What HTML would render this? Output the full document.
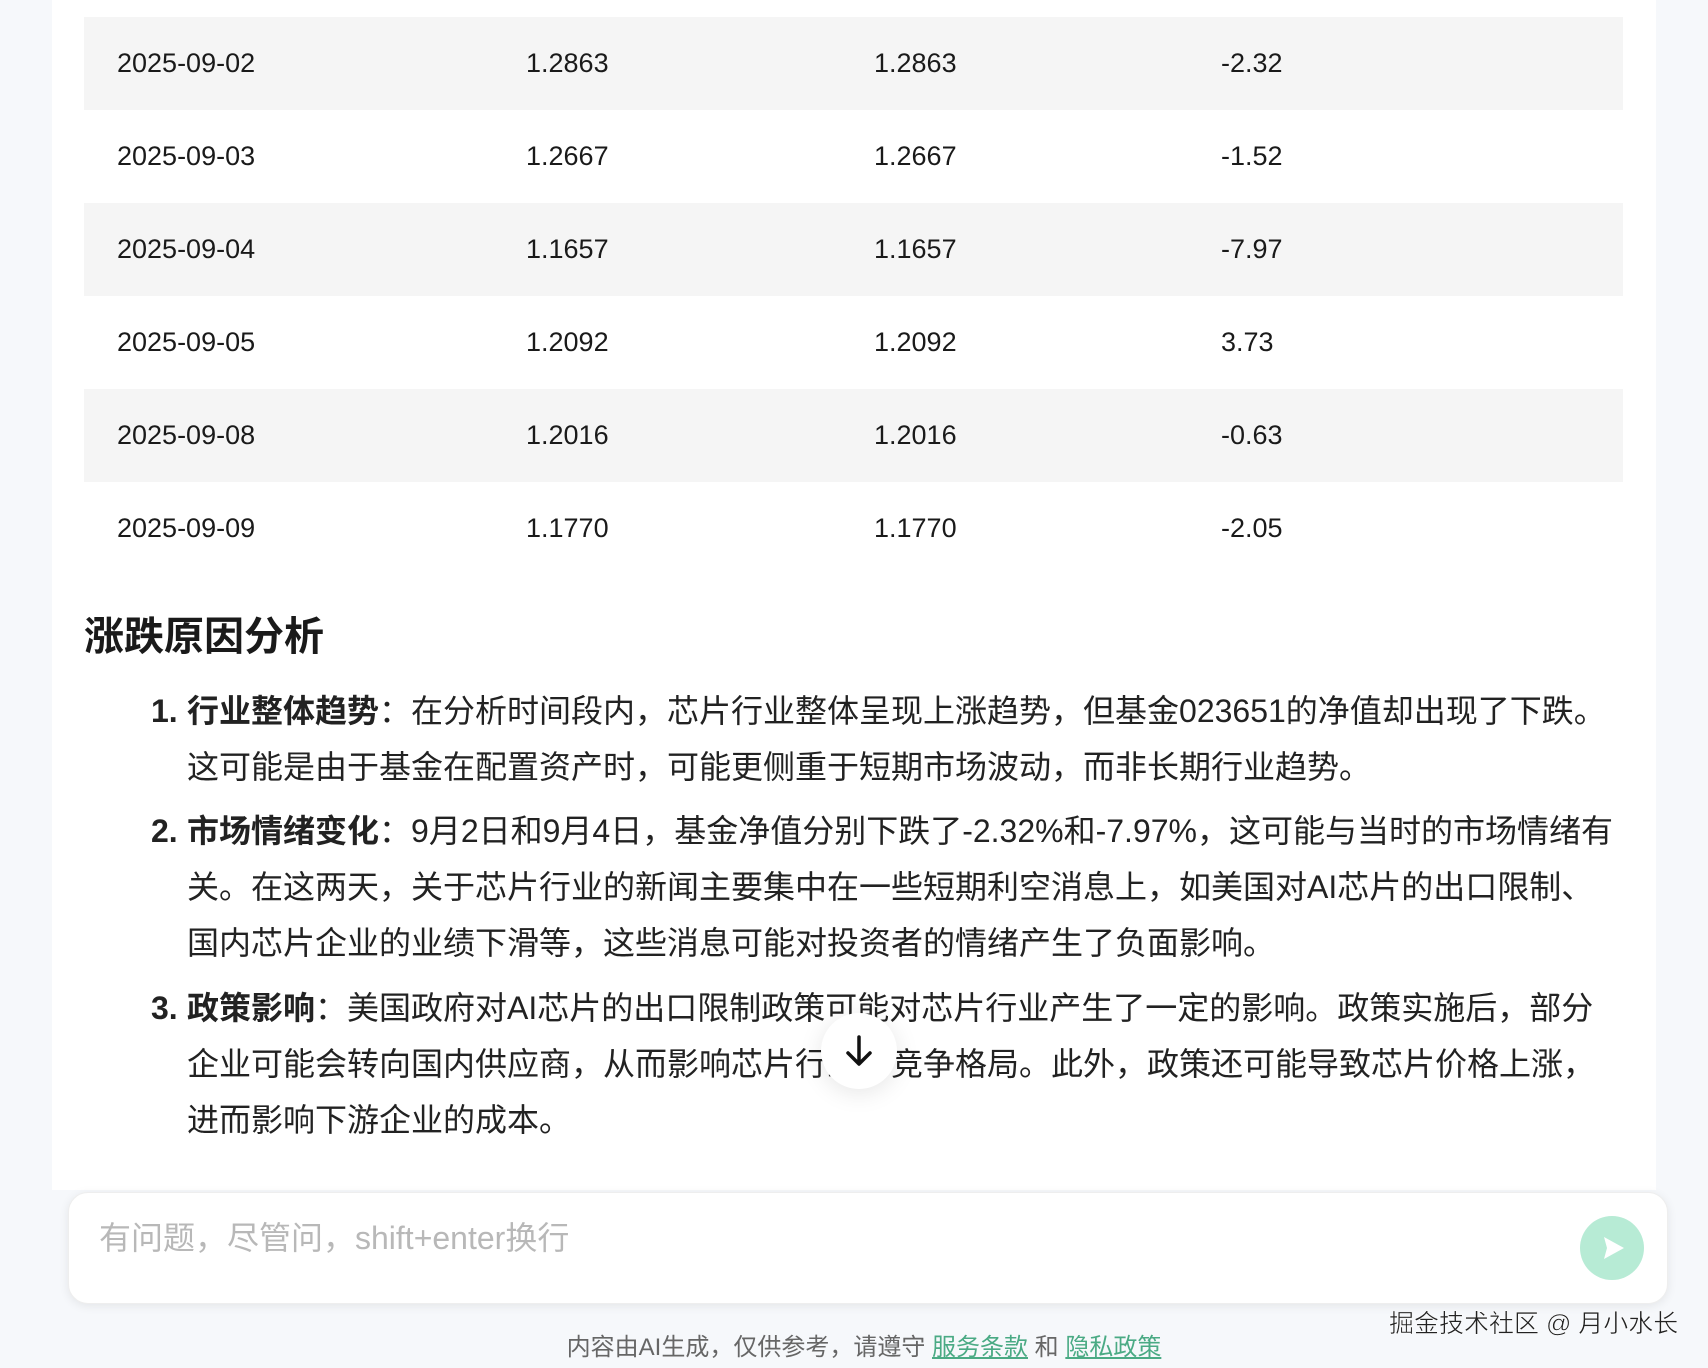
<!DOCTYPE html>
<html><head><meta charset="utf-8"><style>
body{margin:0;width:1708px;height:1368px;background:#f6f8fb;font-family:"Liberation Sans","Noto Sans CJK SC",sans-serif;position:relative;overflow:hidden;color:#1a1a1a}
.panel{position:absolute;left:52px;top:0;width:1604px;height:1190px;background:#fff}
.row{position:absolute;left:84px;width:1539px;height:93px;font-size:27px;line-height:93px}
.row.g{background:#f5f5f5}
.row span{position:absolute;top:0}
h2{position:absolute;left:84px;top:610px;margin:0;font-size:40px;line-height:54px;font-weight:bold}
.li{position:absolute;left:187px;width:1500px;font-size:32px;line-height:56px;color:#222;white-space:nowrap}
.li b{position:absolute;left:-36px}
.li .t{font-weight:bold}
.btn{position:absolute;left:821px;top:1013px;width:76px;height:76px;border-radius:50%;background:#fff;box-shadow:0 4px 24px rgba(0,0,0,.10)}
.input{position:absolute;left:68px;top:1192px;width:1600px;height:112px;background:#fff;border-radius:20px;box-shadow:0 2px 10px rgba(0,0,0,.08);border:1px solid #eee;box-sizing:border-box}
.ph{position:absolute;left:30px;top:20px;font-size:32px;color:#b8b8b8}
.send{position:absolute;left:1580px;top:1216px;width:64px;height:64px;border-radius:50%;background:#b7ebd5}
.foot{position:absolute;left:0;width:1728px;top:1327px;text-align:center;font-size:24px;color:#666}
.foot a{color:#4aaa84;text-decoration:underline}
.wm{position:absolute;left:1389px;top:1304px;font-size:25px;color:#222;-webkit-text-stroke:0.5px #fff}
</style></head><body>
<div class="panel"></div>
<div class="row g" style="top:17px"><span style="left:33px">2025-09-02</span><span style="left:442px">1.2863</span><span style="left:790px">1.2863</span><span style="left:1137px">-2.32</span></div>
<div class="row" style="top:110px"><span style="left:33px">2025-09-03</span><span style="left:442px">1.2667</span><span style="left:790px">1.2667</span><span style="left:1137px">-1.52</span></div>
<div class="row g" style="top:203px"><span style="left:33px">2025-09-04</span><span style="left:442px">1.1657</span><span style="left:790px">1.1657</span><span style="left:1137px">-7.97</span></div>
<div class="row" style="top:296px"><span style="left:33px">2025-09-05</span><span style="left:442px">1.2092</span><span style="left:790px">1.2092</span><span style="left:1137px">3.73</span></div>
<div class="row g" style="top:389px"><span style="left:33px">2025-09-08</span><span style="left:442px">1.2016</span><span style="left:790px">1.2016</span><span style="left:1137px">-0.63</span></div>
<div class="row" style="top:482px"><span style="left:33px">2025-09-09</span><span style="left:442px">1.1770</span><span style="left:790px">1.1770</span><span style="left:1137px">-2.05</span></div>
<h2>涨跌原因分析</h2>
<div class="li" style="top:683px"><b>1.</b><span class="t">行业整体趋势</span>：在分析时间段内，芯片行业整体呈现上涨趋势，但基金023651的净值却出现了下跌。<br>这可能是由于基金在配置资产时，可能更侧重于短期市场波动，而非长期行业趋势。</div>
<div class="li" style="top:803px"><b>2.</b><span class="t">市场情绪变化</span>：9月2日和9月4日，基金净值分别下跌了-2.32%和-7.97%，这可能与当时的市场情绪有<br>关。在这两天，关于芯片行业的新闻主要集中在一些短期利空消息上，如美国对AI芯片的出口限制、<br>国内芯片企业的业绩下滑等，这些消息可能对投资者的情绪产生了负面影响。</div>
<div class="li" style="top:980px"><b>3.</b><span class="t">政策影响</span>：美国政府对AI芯片的出口限制政策可能对芯片行业产生了一定的影响。政策实施后，部分<br>企业可能会转向国内供应商，从而影响芯片行业的竞争格局。此外，政策还可能导致芯片价格上涨，<br>进而影响下游企业的成本。</div>
<div class="btn"><svg width="76" height="76" viewBox="0 0 76 76"><path d="M38 24V50M27 40L38 51L49 40" fill="none" stroke="#111" stroke-width="3.5" stroke-linecap="round" stroke-linejoin="round"/></svg></div>
<div class="input"><div class="ph">有问题，尽管问，shift+enter换行</div></div>
<div class="send"><svg width="64" height="64" viewBox="0 0 64 64"><path d="M24 21L44 32L24 43L27 32Z" fill="#fff"/></svg></div>
<div class="foot">内容由AI生成，仅供参考，请遵守 <a>服务条款</a> 和 <a>隐私政策</a></div>
<div class="wm">掘金技术社区 @ 月小水长</div>
</body></html>
